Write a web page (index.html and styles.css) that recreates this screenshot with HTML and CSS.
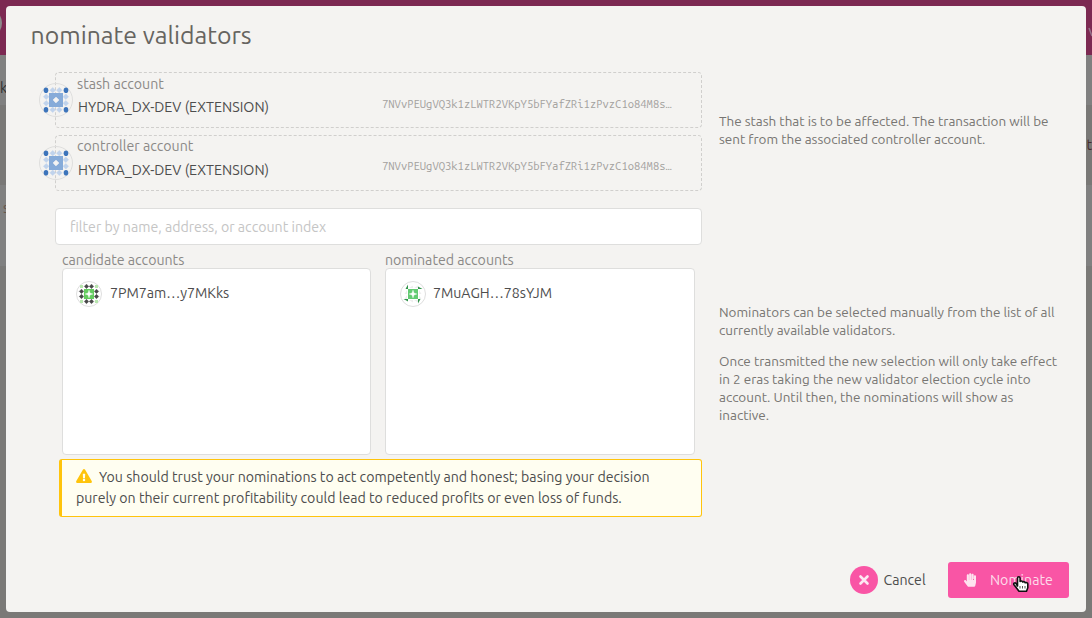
FILE: index.html
```
<!DOCTYPE html>
<html lang="en">
<head>
<meta charset="utf-8">
<title>nominate validators</title>
<link rel="stylesheet" href="styles.css">
</head>
<body>
<svg width="0" height="0" class="defs">
  <defs>
    <symbol id="hydra" viewBox="0 0 34 34">
      <circle cx="17" cy="17" r="16.5" fill="none" stroke="#dededd"/>
      <g fill="#c0d3ec">
        <path d="M13.700 4.400l2.800 2.800-2.800 2.800-2.800-2.800zM20.300 4.400l2.800 2.800-2.800 2.800-2.800-2.800zM13.700 24l2.800 2.800-2.800 2.800-2.800-2.800zM20.300 24l2.800 2.800-2.800 2.800-2.800-2.800zM7.200 10.900l2.800 2.800-2.800 2.800-2.800-2.800zM7.200 17.500l2.800 2.800-2.800 2.800-2.800-2.800zM26.800 10.900l2.800 2.800-2.800 2.800-2.800-2.800zM26.800 17.500l2.800 2.800-2.800 2.800-2.800-2.800z" stroke="#c0d3ec" stroke-width=".5"/>
      </g>
      <g fill="#3c74bb"><ellipse cx="7" cy="7.200" rx="2.300" ry="2.800"/><ellipse cx="27" cy="7.200" rx="2.300" ry="2.800"/><ellipse cx="7" cy="26.800" rx="2.300" ry="2.800"/><ellipse cx="27" cy="26.800" rx="2.300" ry="2.800"/></g>
      <path d="M10 10h14v14H10z" fill="#86abd9"/>
      <path d="M17 14.200l2.800 2.800-2.800 2.800-2.800-2.800z" fill="#f5f4f3" stroke="#f5f4f3" stroke-width=".8"/>
    </symbol>
    <symbol id="candidate" viewBox="0 0 26 26">
      <circle cx="13" cy="13" r="12.5" fill="#fff" stroke="#dedede"/>
      <path d="M4 4h3v3H4zM19 4h3v3h-3zM4 19h3v3H4zM19 19h3v3h-3z" fill="#b7e6ad"/>
      <path d="M10.5 3.2l2.2 2.2-2.2 2.2-2.2-2.2zM15.5 3.2l2.2 2.2-2.2 2.2-2.2-2.2zM10.5 18.3l2.2 2.2-2.2 2.2-2.2-2.2zM15.5 18.3l2.2 2.2-2.2 2.2-2.2-2.2zM5.5 8.2l2.2 2.2-2.2 2.2-2.2-2.2zM5.5 13.3l2.2 2.2-2.2 2.2-2.2-2.2zM20.5 8.2l2.2 2.2-2.2 2.2-2.2-2.2zM20.5 13.3l2.2 2.2-2.2 2.2-2.2-2.2z" fill="#484848" stroke="#484848" stroke-width=".5"/>
      <path d="M8 8h10v10H8z" fill="#65cc60"/>
      <path d="M13 9l1 3 3 1-3 1-1 3-1-3-3-1 3-1z" fill="#fff" stroke="#fff" stroke-width=".3"/>
    </symbol>
    <symbol id="nominated" viewBox="0 0 26 26">
      <circle cx="13" cy="13" r="12.5" fill="#fff" stroke="#dedede"/>
      <path d="M8 3.500V8H5.500zM18 5.500L22.500 8H18zM3.500 18H8v2.500zM18 18h2.500L18 22.500z" fill="#32944b"/>
      <path d="M9 7l4-2.500V7zM14 7l4-2.500V7zM7 9L4.500 13H7zM7 14l-2.500 4H7zM19 9l2.500 4H19zM19 14l2.500 4H19zM9 19l4 2.500V19zM14 19l4 2.500V19z" fill="#eee"/>
      <path d="M8 8h10v10H8z" fill="#63cb72"/>
      <path d="M13 9l1 3 3 1-3 1-1 3-1-3-3-1 3-1z" fill="#fff" stroke="#fff" stroke-width=".3"/>
    </symbol>
  </defs>
</svg>
<div class="page">
  <div class="page-header"><i></i><svg width="4" height="10"><path d="M1 1l3 8" stroke="#96738a" stroke-width="1.500" fill="none"/></svg></div>
  <div class="page-tabs"><span>k</span></div>
  <div class="page-summary"><span>t</span></div>
  <div class="page-list"><span>s</span></div>
</div>
<main class="modal">
  <h1>nominate validators</h1>
  <div class="columns">
    <section class="form">
      <div class="account">
        <svg class="identicon"><use href="#hydra"/></svg>
        <div class="account-name"><label>stash account</label><span>HYDRA_DX-DEV (EXTENSION)</span></div>
        <span class="address">7NVvPEUgVQ3k1zLWTR2VKpY5bFYafZRi1zPvzC1o84M8s…</span>
      </div>
      <div class="account controller">
        <svg class="identicon"><use href="#hydra"/></svg>
        <div class="account-name"><label>controller account</label><span>HYDRA_DX-DEV (EXTENSION)</span></div>
        <span class="address">7NVvPEUgVQ3k1zLWTR2VKpY5bFYafZRi1zPvzC1o84M8s…</span>
      </div>
      <div class="filter"><span>filter by name, address, or account index</span></div>
      <div class="lists">
        <div class="list"><label>candidate accounts</label>
          <div class="list-box"><svg><use href="#candidate"/></svg><span>7PM7am…y7MKks</span></div></div>
        <div class="list"><label>nominated accounts</label>
          <div class="list-box"><svg><use href="#nominated"/></svg><span>7MuAGH…78sYJM</span></div></div>
      </div>
      <div class="warning">
        <div class="warning-line"><svg viewBox="0 0 576 512"><path fill="#ffc40c" d="M569.500 440C588 472 564.800 512 527.900 512H48.100c-36.900 0-60-40.100-41.600-72L246.400 24c18.500-32 64.700-32 83.200 0zM288 354a46 46 0 1 0 0 92 46 46 0 0 0 0-92zm-43.700-165.300l7.400 136c.4 6.400 5.600 11.300 12 11.300h48.600c6.400 0 11.600-5 12-11.300l7.400-136c.4-6.900-5.100-12.700-12-12.700h-63.400c-6.900 0-12.400 5.800-12 12.700z"/></svg><span>You should trust your nominations to act competently and honest; basing your decision</span></div>
        <div>purely on their current profitability could lead to reduced profits or even loss of funds.</div>
      </div>
    </section>
    <aside>
      <p class="stash-help">The stash that is to be affected. The transaction will be<br>sent from the associated controller account.</p>
      <p class="nominators-help">Nominators can be selected manually from the list of all<br>currently available validators.</p>
      <p class="era-help">Once transmitted the new selection will only take effect<br>in 2 eras taking the new validator election cycle into<br>account. Until then, the nominations will show as<br>inactive.</p>
    </aside>
  </div>
  <footer>
    <button class="cancel"><i><svg width="12" height="12" viewBox="0 0 12 12"><path d="M2.500 2.500l7 7M9.500 2.500l-7 7" stroke="#fde9f2" stroke-width="2.600" stroke-linecap="round"/></svg></i><span>Cancel</span></button>
    <button class="nominate"><svg width="12" height="14" viewBox="0 0 448 512"><path fill="#fee3ef" d="M408.800 79c-22 .4-39.800 18.700-39.800 40.800V256h-8V61.600c0-22.100-17.700-40.300-39.800-40.600-22.400-.3-41.200 18.100-41.200 40.500V256h-8V40.800C272 18.700 254.200.4 232.200 0 209.800-.4 192 17.600 192 40v216h-8V80.800c0-22.100-17.800-40.400-39.800-40.800-22.400-.4-40.200 17.600-40.200 40v236l-31.600-43.500c-13-17.900-38-21.800-55.900-8.800-17.900 13-21.800 38-8.800 55.900L133.600 491c9 12.900 23.400 21 39.400 21h205.700c18.700 0 34.900-12.900 39.200-31.100l26.500-112.700c2.400-10.100 3.600-20.400 3.600-30.800V119c0-22.400-17.800-40.400-39.200-40z"/></svg><span>Nominate</span></button>
    <svg class="cursor" width="16" height="18" viewBox="0 0 16 18"><path d="M4.500 11V3.200c0-2 2.600-2 2.600 0v3.300c.8-.8 2.300-.5 2.600.5.900-.7 2.200-.2 2.500.7 1-.5 2.600 0 2.600 1.200v3.900l-1.300 3.400H6L1 9.800c-1-1.500.8-2.600 2-1.500z" fill="#fff" stroke="#111" stroke-width="1.600" stroke-linejoin="round"/><path d="M7 11v2.500M9.500 11v2.500M12 11v2.500" stroke="#555"/></svg>
  </footer>
</main>
</body>
</html>
```
FILE: styles.css
```
* { box-sizing: border-box; }
body { margin: 0; width: 1092px; height: 618px; overflow: hidden; position: relative; font: 14.170px/18px Ubuntu, "Noto Sans", sans-serif; color: #4d4d4d; }
.defs { position: absolute; }
.page { height: 618px; background: #7a7977; overflow: hidden; }
.page-header { height: 55px; background: #7c2952; display: flex; justify-content: space-between; overflow: hidden; }
.page-header i { width: 30px; height: 30px; margin: 8px 0 0 -28px; border-radius: 50%; background: #8c898a; }
.page-header svg { margin-top: 27px; }
.page-tabs { height: 50px; background: #808080; padding-top: 24px; color: #303030; }
.page-summary { height: 80px; background: #797876; padding-top: 31px; text-align: right; color: #482c2c; }
.page-list { height: 81px; background: #808080; padding: 14px 0 0 3px; color: #67564a; }
.modal { position: absolute; left: 6px; top: 6px; width: 1080px; height: 606px; padding: 0 17px 0 24px; background: #f4f3f1; border-radius: 4px; display: flex; flex-direction: column; white-space: nowrap; }
h1 { margin: 0; height: 66px; padding: 12px 0 0 0.6px; font-size: 24.800px; line-height: 34px; font-weight: 400; color: #666460; }
label { color: #8b8987; display: block; }
.columns { display: flex; height: 488px; }
.form { width: 647px; margin-left: 25px; }
.account { height: 56px; margin-bottom: 7px; border: 1px dashed #d0cfcd; border-radius: 4px; display: flex; }
.controller { margin-bottom: 17px; }
.identicon { width: 34px; height: 34px; flex: none; margin: 10px 0 0 -17px; }
.account-name { width: 309px; flex: none; padding: 2px 0 0 4px; }
.account-name span { display: block; margin: 5px 0 0 1px; font-size: 14.250px; }
.controller .account-name { padding-top: 1px; }
.controller .account-name span { margin-top: 6px; }
.address { font: 11.260px/18px "Ubuntu Mono", "DejaVu Sans Mono", monospace; margin-top: 22px; color: #a3a19e; }
.controller .address { margin-top: 21px; }
.filter { height: 37px; background: #fff; border: 1px solid #dededd; border-radius: 4px; padding: 9px 14px; color: #c5c5c5; }
.lists { display: flex; gap: 14px; padding: 6px 7px 0; }
.list { width: 309px; }
.list + .list { width: 310px; }
.list-box { height: 187px; margin-top: -1px; background: #fff; border: 1px solid #dededd; border-radius: 4px; padding: 12px 13px; display: flex; align-items: flex-start; }
.list-box svg { width: 26px; height: 26px; margin-right: 8px; }
.list + .list svg { margin: 0 7px 0 1px; }
.list-box span { line-height: 24px; }
.warning { margin: 4px 0 0 4px; height: 58px; background: #fffef1; border: 1px solid #ffc40c; border-left-width: 3px; border-radius: 3px; padding: 7px 14px; line-height: 21px; }
.warning-line { display: flex; }
.warning svg { width: 16px; height: 14px; margin: 2px 7px 0 0; }
aside { width: 350px; margin-left: 17px; font-size: 13.470px; color: #777572; padding-top: 40px; }
aside p { margin: 0; }
.nominators-help { margin-top: 155px; }
.era-help { margin-top: 13px; }
footer { display: flex; justify-content: flex-end; align-items: center; height: 40px; position: relative; }
button { border: 0; background: none; font: inherit; color: inherit; padding: 0; display: flex; align-items: center; }
.cancel { width: 98px; gap: 5.500px; }
.cancel i { width: 28px; height: 28px; flex: none; border-radius: 50%; background: #f955a5; display: flex; align-items: center; justify-content: center; }
.nominate { width: 121px; height: 36px; background: #f955a5; border-radius: 3px; color: #fddcea; padding-left: 16px; gap: 14px; }
.cursor { position: absolute; left: 983px; top: 15px; }
```
